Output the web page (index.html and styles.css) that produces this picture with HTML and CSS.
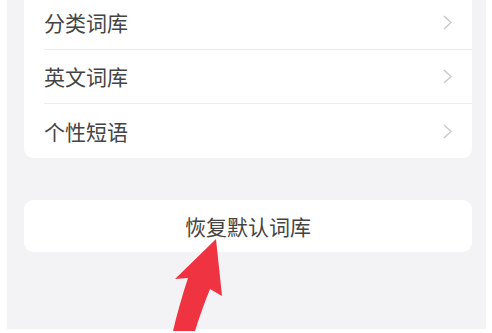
FILE: index.html
```html
<!DOCTYPE html>
<html lang="zh-CN">
<head>
  <meta charset="UTF-8">
  <meta name="viewport" content="width=device-width, initial-scale=1.0">
  <title>词库设置</title>
  <link rel="stylesheet" href="styles.css">
</head>
<body>
  <div class="screen">
    <div class="card">
      <div class="cell">
        <span class="cell-title">分类词库</span>
        <svg class="arrow-right" viewBox="0 0 9 15"><path d="M1 1 L8 7.5 L1 14" /></svg>
      </div>
      <div class="cell">
        <span class="cell-title">英文词库</span>
        <svg class="arrow-right" viewBox="0 0 9 15"><path d="M1 1 L8 7.5 L1 14" /></svg>
      </div>
      <div class="cell">
        <span class="cell-title">个性短语</span>
        <svg class="arrow-right" viewBox="0 0 9 15"><path d="M1 1 L8 7.5 L1 14" /></svg>
      </div>
    </div>

    <div class="reset-btn">恢复默认词库</div>

    <!-- 标注箭头 -->
    <svg class="pointer" viewBox="0 0 80 95">
      <path d="M56 3 L62 60 L50 53 C44 68 39 82 35 95 L13 95 C17 78 22 60 28 42 L15 43 Z" />
    </svg>
  </div>
</body>
</html>
```

FILE: styles.css
```css
*{
  box-sizing: border-box;
}
html, body{
  margin: 0;
  height: 100%;
  overflow: hidden;
  background: #fff;
}
body{
  font-family: "Noto Sans CJK SC", "Noto Sans", sans-serif;
}
.screen{
  position: relative;
  height: 100%;
  margin: 0 6px 0 7px;
  padding: 0 14px 0 17px;
  background: #f3f3f5;
}
.card{
  margin-top: -4px;
  background: #fff;
  border-radius: 0 0 9px 9px;
}
.cell{
  display: flex;
  align-items: center;
  justify-content: space-between;
  height: 54px;
  margin-left: 20px;
  padding-right: 20px;
  border-bottom: 1px solid #ededef;
}
.cell:last-child{
  border-bottom: none;
}
.cell-title{
  font-size: 21px;
  color: #444;
  line-height: 1;
}
.arrow-right{
  width: 9px;
  height: 15px;
  fill: none;
  stroke: #c8c8c8;
  stroke-width: 1.4;
}
.reset-btn{
  margin-top: 42px;
  height: 52px;
  line-height: 52px;
  text-align: center;
  font-size: 21px;
  color: #444;
  background: #fff;
  border-radius: 9px;
}
.pointer{
  position: absolute;
  left: 153px;
  top: 240px;
  width: 80px;
  height: 95px;
  fill: #ef3340;
}
```
